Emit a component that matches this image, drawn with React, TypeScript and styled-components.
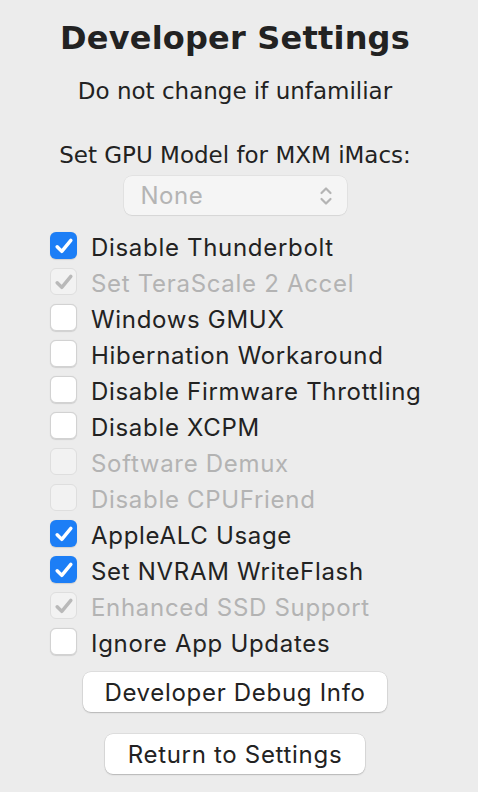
import React from "react";
import styled, { createGlobalStyle } from "styled-components";

const Global = createGlobalStyle`
  html, body { margin: 0; padding: 0; background: #ececec; }
  body { font-family: "Inter", "Liberation Sans", sans-serif; }
`;

const Page = styled.div`
  width: 478px;
  height: 792px;
  box-sizing: border-box;
  background: #ececec;
  display: flex;
  flex-direction: column;
  align-items: center;
  padding: 16px 8px 0 0;
`;

const Title = styled.h1`
  margin: 0;
  font-family: "DejaVu Sans", sans-serif;
  font-weight: bold;
  font-size: 32px;
  line-height: 44px;
  color: #222;
  letter-spacing: 0.2px;
`;

const Subtitle = styled.div`
  margin-top: 17px;
  font-family: "DejaVu Sans", sans-serif;
  font-size: 23px;
  line-height: 28px;
  color: #222;
`;

const Label = styled.div`
  margin-top: 36px;
  font-family: "DejaVu Sans", sans-serif;
  font-size: 23px;
  line-height: 28px;
  color: #222;
`;

const Popup = styled.div`
  margin-top: 7px;
  width: 223px;
  height: 39px;
  box-sizing: border-box;
  border-radius: 8px;
  background: #f5f5f5;
  box-shadow: 0 0 0 0.5px rgba(0, 0, 0, 0.08), 0 1px 1px rgba(0, 0, 0, 0.06);
  display: flex;
  align-items: center;
  justify-content: space-between;
  padding: 0 14px 0 17px;
  font-size: 24px;
  letter-spacing: 0.5px;
  color: #b4b4b4;
`;

const List = styled.div`
  margin-top: 14px;
  align-self: flex-start;
  margin-left: 50px;
  display: flex;
  flex-direction: column;
`;

const Row = styled.label<{ $disabled?: boolean }>`
  height: 36px;
  display: flex;
  align-items: center;
  gap: 14px;
  font-size: 24px;
  letter-spacing: 0.69px;
  color: ${(p) => (p.$disabled ? "#b3b3b3" : "#222")};
`;

const Box = styled.span<{ $checked?: boolean; $disabled?: boolean }>`
  width: 27px;
  height: 27px;
  flex-shrink: 0;
  box-sizing: border-box;
  border-radius: 6px;
  display: flex;
  align-items: center;
  justify-content: center;
  margin-top: -3px;
  background: ${(p) =>
    p.$disabled ? "#f2f2f2" : p.$checked ? "#1c7ef6" : "#ffffff"};
  border: ${(p) =>
    p.$checked && !p.$disabled ? "none" : p.$disabled ? "1px solid #dedede" : "1px solid #d2d2d2"};
  box-shadow: ${(p) =>
    p.$disabled ? "none" : "0 0.5px 1px rgba(0,0,0,0.12)"};
`;

const Buttons = styled.div`
  margin-top: 11px;
  display: flex;
  flex-direction: column;
  align-items: center;
  gap: 22px;
`;

const Button = styled.button<{ $w: number }>`
  width: ${(p) => p.$w}px;
  height: 40px;
  border: none;
  border-radius: 8px;
  background: #ffffff;
  box-shadow: 0 0 0 0.5px rgba(0, 0, 0, 0.12), 0 1px 1.5px rgba(0, 0, 0, 0.18);
  font-family: "Inter", "Liberation Sans", sans-serif;
  font-size: 24px;
  letter-spacing: 0.69px;
  color: #222;
  padding: 0;
`;

const Check = ({ color }: { color: string }) => (
  <svg width="20" height="18" viewBox="0 0 19 17">
    <path
      d="M3 9.2 L7.4 13.6 L16 3.2"
      fill="none"
      stroke={color}
      strokeWidth="3.3"
      strokeLinecap="round"
      strokeLinejoin="round"
    />
  </svg>
);

const Chevrons = () => (
  <svg width="14" height="22" viewBox="0 0 14 22">
    <path
      d="M2.5 8 L7 3.5 L11.5 8 M2.5 14 L7 18.5 L11.5 14"
      fill="none"
      stroke="#b4b4b4"
      strokeWidth="2.2"
      strokeLinecap="round"
      strokeLinejoin="round"
    />
  </svg>
);

type Item = { label: string; checked?: boolean; disabled?: boolean };

const items: Item[] = [
  { label: "Disable Thunderbolt", checked: true },
  { label: "Set TeraScale 2 Accel", checked: true, disabled: true },
  { label: "Windows GMUX" },
  { label: "Hibernation Workaround" },
  { label: "Disable Firmware Throttling" },
  { label: "Disable XCPM" },
  { label: "Software Demux", disabled: true },
  { label: "Disable CPUFriend", disabled: true },
  { label: "AppleALC Usage", checked: true },
  { label: "Set NVRAM WriteFlash", checked: true },
  { label: "Enhanced SSD Support", checked: true, disabled: true },
  { label: "Ignore App Updates" },
];

export default function App() {
  return (
    <>
      <Global />
      <Page>
        <Title>Developer Settings</Title>
        <Subtitle>Do not change if unfamiliar</Subtitle>
        <Label>Set GPU Model for MXM iMacs:</Label>
        <Popup>
          <span>None</span>
          <Chevrons />
        </Popup>
        <List>
          {items.map((it) => (
            <Row key={it.label} $disabled={it.disabled}>
              <Box $checked={it.checked} $disabled={it.disabled}>
                {it.checked && <Check color={it.disabled ? "#b9b9b9" : "#ffffff"} />}
              </Box>
              {it.label}
            </Row>
          ))}
        </List>
        <Buttons>
          <Button $w={304}>Developer Debug Info</Button>
          <Button $w={260}>Return to Settings</Button>
        </Buttons>
      </Page>
    </>
  );
}
